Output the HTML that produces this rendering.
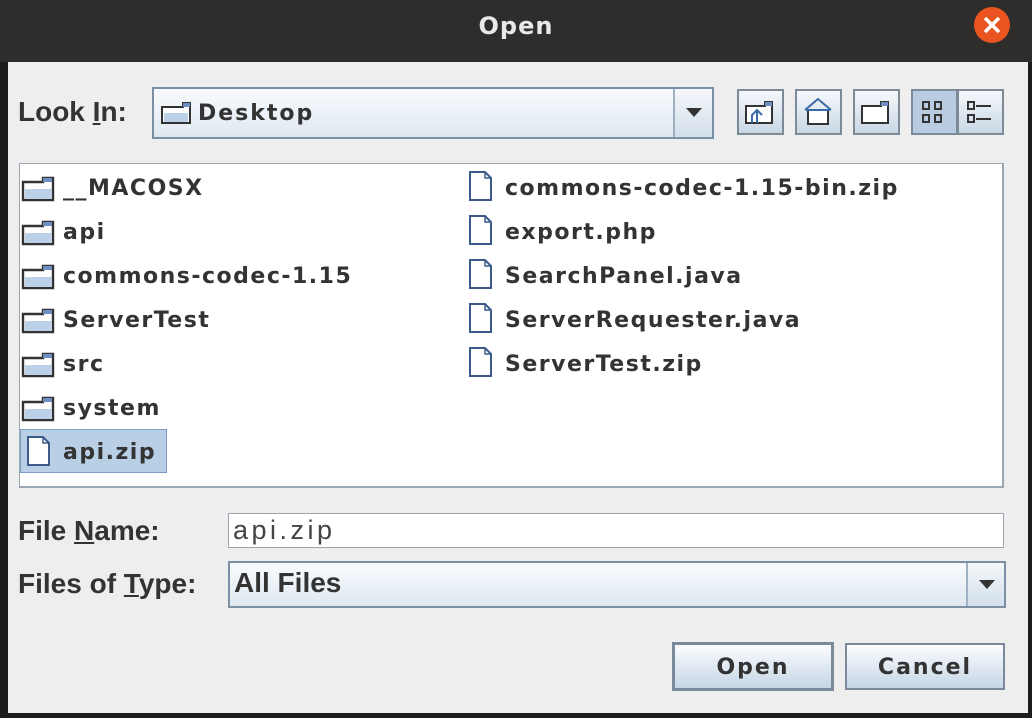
<!DOCTYPE html>
<html><head><meta charset="utf-8"><style>
*{margin:0;padding:0;box-sizing:border-box}
body{width:1032px;height:718px;background:#1c1c1c;position:relative;overflow:hidden;font-family:"DejaVu Sans",sans-serif}
.abs{position:absolute}
.title{left:0;top:0;width:1032px;height:62px;background:#2f2d2b;color:#e8e8e8;font:bold 24px "DejaVu Sans",sans-serif;text-align:center;line-height:52px;letter-spacing:1px}
.close{left:974px;top:7px;width:36px;height:36px;border-radius:50%;background:#e95420}
.body{left:8px;top:62px;width:1020px;height:651px;background:#eeeeee}
.lbl{font:bold 28px "Liberation Sans",sans-serif;color:#333}
.combo{border:2px solid #7b8fa5;background:linear-gradient(#f8fbfd,#dfe8f1)}
.arrow{border-left:2px solid #9fb0c2;background:linear-gradient(#f4f7fa,#d3dfeb)}
.tri{width:0;height:0;border-left:8px solid transparent;border-right:8px solid transparent;border-top:9px solid #333}
.tb{width:47px;height:46px;border:2px solid #7d8a98;background:linear-gradient(#f5f8fb,#c9d7e5)}
.list{left:19px;top:163px;width:985px;height:325px;background:#fff;border:1px solid #9aa6b2;border-right:2px solid #9aa6b2;border-bottom:2px solid #9aa6b2}
.item{font:bold 22px "DejaVu Sans",sans-serif;color:#333;height:44px;line-height:44px;letter-spacing:1.5px}
.btn{border:3px solid #7b8a9a;background:linear-gradient(#fbfcfe,#c6d6e6);font:bold 22px "DejaVu Sans",sans-serif;color:#333;text-align:center;letter-spacing:2px}
</style></head><body>
<div class="abs title">Open</div>
<div class="abs close"><svg width="36" height="36"><path d="M11 11L25 25M25 11L11 25" stroke="#fff" stroke-width="3.5"/></svg></div>
<div class="abs body"></div>

<div class="abs lbl" style="left:18px;top:96px">Look <u>I</u>n:</div>
<div class="abs combo" style="left:152px;top:87px;width:562px;height:52px"></div>
<svg class="abs" style="left:161px;top:101px" width="32" height="24"><path d="M1 6H22V2H29V22H1Z" fill="#fff" stroke="#333" stroke-width="2"/><rect x="3" y="12" width="24" height="9" fill="#bcd0e8"/><rect x="22" y="2" width="7" height="4" fill="#6d8fc4"/></svg>
<div class="abs item" style="left:198px;top:92px;letter-spacing:2px">Desktop</div>
<div class="abs arrow" style="left:673px;top:89px;width:39px;height:48px"><div class="tri" style="margin:19px 0 0 11px"></div></div>

<div class="abs tb" style="left:737px;top:89px"><svg width="43" height="42"><path d="M7 15H26V11H33V32H7Z" fill="#fff" stroke="#333" stroke-width="2"/><rect x="26" y="11" width="7" height="4" fill="#6d8fc4"/><path d="M13 32V24L18 19L23 24M18 20V32" stroke="#3a6aa8" stroke-width="2" fill="none"/></svg></div>
<div class="abs tb" style="left:795px;top:89px"><svg width="43" height="42"><path d="M8 19L21 8L34 19" stroke="#3a6aa8" stroke-width="2" fill="none"/><rect x="11" y="19" width="20" height="14" fill="#fff" stroke="#333" stroke-width="2"/><path d="M9 19H33" stroke="#3a6aa8" stroke-width="2"/></svg></div>
<div class="abs tb" style="left:853px;top:89px"><svg width="43" height="42"><path d="M7 15H26V11H33V32H7Z" fill="#fff" stroke="#333" stroke-width="2"/><rect x="26" y="11" width="7" height="4" fill="#6d8fc4"/></svg></div>
<div class="abs tb" style="left:911px;top:89px;background:#b8cbe0"><svg width="43" height="42"><g stroke="#333" stroke-width="2" fill="none"><rect x="10" y="11" width="6" height="7"/><rect x="22" y="11" width="6" height="7"/><rect x="10" y="24" width="6" height="7"/><rect x="22" y="24" width="6" height="7"/></g></svg></div>
<div class="abs tb" style="left:957px;top:89px"><svg width="43" height="42"><g stroke="#333" stroke-width="2" fill="none"><rect x="9" y="11" width="6" height="7"/><rect x="9" y="24" width="6" height="7"/><path d="M17 15H32M17 28H32"/></g></svg></div>

<div class="abs list"></div>
<div class="abs" style="left:20px;top:429px;width:147px;height:44px;background:#b9cfe6;border:1px solid #7c9cc8"></div>
<svg class="abs" style="left:20px;top:165px" width="40" height="310">
<defs><g id="f"><path d="M3 5H23V1H33V23H3Z" fill="#fff" stroke="#333" stroke-width="2.4"/><rect x="5" y="12" width="27" height="10" fill="#bcd0e8"/><rect x="23" y="1" width="9" height="4" fill="#6d8fc4"/></g>
<g id="d"><path d="M3 2H18L24 8V30H3Z" fill="#fff" stroke="#3b5a87" stroke-width="2"/><path d="M18 2V8H24" fill="none" stroke="#3b5a87" stroke-width="1.5"/></g></defs>
<use href="#f" x="0" y="12"/><use href="#f" x="0" y="56"/><use href="#f" x="0" y="100"/><use href="#f" x="0" y="144"/><use href="#f" x="0" y="188"/><use href="#f" x="0" y="232"/><use href="#d" x="5" y="270"/>
</svg>
<svg class="abs" style="left:465px;top:170px" width="30" height="220">
<use href="#d" x="2" y="0"/><use href="#d" x="2" y="44"/><use href="#d" x="2" y="88"/><use href="#d" x="2" y="132"/><use href="#d" x="2" y="176"/>
</svg>
<div class="abs" style="left:63px;top:167px">
<div class="item">__MACOSX</div><div class="item">api</div><div class="item">commons-codec-1.15</div><div class="item">ServerTest</div><div class="item">src</div><div class="item">system</div><div class="item">api.zip</div>
</div>
<div class="abs" style="left:505px;top:167px">
<div class="item">commons-codec-1.15-bin.zip</div><div class="item">export.php</div><div class="item">SearchPanel.java</div><div class="item">ServerRequester.java</div><div class="item">ServerTest.zip</div>
</div>

<div class="abs lbl" style="left:18px;top:515px">File <u>N</u>ame:</div>
<div class="abs" style="left:228px;top:513px;width:776px;height:35px;background:#fff;border:1px solid #9aa6b2;font:27px 'Liberation Sans',sans-serif;color:#444;padding:1px 0 0 4px;letter-spacing:3.5px">api.zip</div>
<div class="abs lbl" style="left:18px;top:568px">Files of <u>T</u>ype:</div>
<div class="abs combo" style="left:228px;top:561px;width:778px;height:47px"></div>
<div class="abs lbl" style="left:234px;top:567px">All Files</div>
<div class="abs arrow" style="left:966px;top:563px;width:38px;height:43px"><div class="tri" style="margin:17px 0 0 11px"></div></div>

<div class="abs btn" style="left:672px;top:642px;width:162px;height:49px;line-height:45px">Open</div>
<div class="abs btn" style="left:845px;top:643px;width:160px;height:47px;line-height:45px;border-width:2px">Cancel</div>
</body></html>
